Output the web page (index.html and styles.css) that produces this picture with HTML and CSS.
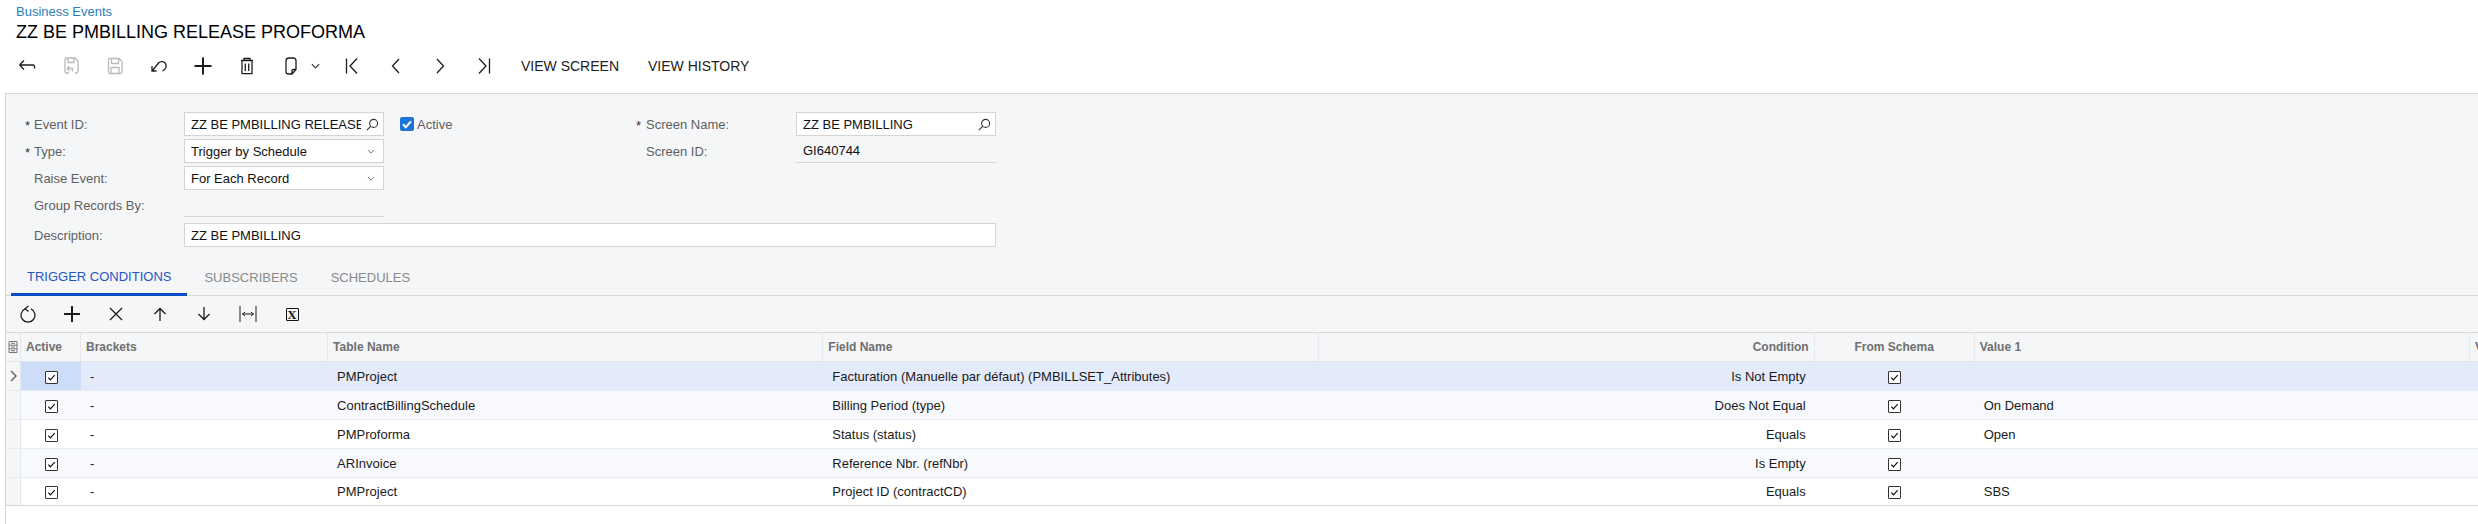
FILE: index.html
```html
<!DOCTYPE html>
<html>
<head>
    <meta charset="utf-8">
    <title>ZZ BE PMBILLING RELEASE PROFORMA</title>
    <link rel="stylesheet" href="styles.css">
</head>
<body>
<div class="page-head">
    <a class="crumb" href="#">Business Events</a>
    <div class="page-title">ZZ BE PMBILLING RELEASE PROFORMA</div>
    <div class="toolbar">
        <button class="tool"><svg class="ic" viewBox="0 0 18 18"><path d="M1.500 8l4.500-4.500M1.500 8l4.500 4.500M1.500 8h13.500a1.500 1.500 0 0 1 1.500 1.500v2"/></svg></button>
        <button class="tool off"><svg class="ic" viewBox="0 0 18 18"><path d="M7 16H4.500A1.500 1.500 0 0 1 3 14.500V2.500A1.500 1.500 0 0 1 4.500 1H13l3 3v10.500a1.500 1.500 0 0 1-1.500 1.500H13M6 1v4.500h6V1M5 11.500l2.500-2.500M5 11.500l2.500 2.500M5 11.500h5.500v3"/></svg></button>
        <button class="tool off"><svg class="ic" viewBox="0 0 18 18"><path d="M4 1.500h9l3 3v10.500a1.500 1.500 0 0 1-1.500 1.500h-10.500A1.500 1.500 0 0 1 2.500 15V3A1.500 1.500 0 0 1 4 1.500zM5.500 1.500v5h7v-5M5 16.500v-6h8v6"/></svg></button>
        <button class="tool"><svg class="ic" viewBox="0 0 18 18"><path d="M2 9v5h4.500M2.500 13.500L8.500 6C10.500 3.800 15 4 16 7.500 16.600 10 15 12.500 12.500 14"/></svg></button>
        <button class="tool"><svg class="ic heavy" viewBox="0 0 18 18"><path d="M9 .5v17M.5 9h17"/></svg></button>
        <button class="tool"><svg class="ic" viewBox="0 0 18 18"><path d="M3 3.500h12M6 3.500V1.500h6v2M4 3.500v13.200h10V3.500M7.300 6.500v7.500M10.700 6.500v7.500"/></svg></button>
        <button class="tool tool-menu"><svg class="ic" viewBox="0 0 18 18"><path d="M7 1h4.500A2.500 2.500 0 0 1 14 3.500v9L10 17H6.500A2.500 2.500 0 0 1 4 14.500V4A3 3 0 0 1 7 1zM14 12.500h-2.500A1.500 1.500 0 0 0 10 14v3"/></svg><svg class="ic-small" viewBox="0 0 10 6"><path d="M1 1l4 4 4-4"/></svg></button>
        <button class="tool"><svg class="ic" viewBox="0 0 18 18"><path d="M3.500 1.500v15M14 1.500L7 9l7 7.500"/></svg></button>
        <button class="tool"><svg class="ic" viewBox="0 0 18 18"><path d="M12 2L5.500 9l6.500 7"/></svg></button>
        <button class="tool"><svg class="ic" viewBox="0 0 18 18"><path d="M6 2l6.500 7L6 16"/></svg></button>
        <button class="tool"><svg class="ic" viewBox="0 0 18 18"><path d="M14.500 1.500v15M4 1.500L11 9l-7 7.500"/></svg></button>
        <button class="tool-text">VIEW SCREEN</button>
        <button class="tool-text">VIEW HISTORY</button>
    </div>
</div>

<div class="panel">
    <div class="form">
        <div class="form-top">
            <div class="form-col first">
                <div class="form-row">
                    <span class="star">*</span><label>Event ID:</label>
                    <div class="input lookup"><span class="input-text">ZZ BE PMBILLING RELEASE PROFORMA</span><svg class="search" viewBox="0 0 14 14"><circle cx="8.200" cy="5.800" r="4.300"/><path d="M5 9l-4 4"/></svg></div>
                    <span class="check-blue"><svg viewBox="0 0 14 14"><path d="M3 7.300l2.800 2.900L11 4.300"/></svg></span><span class="check-label">Active</span>
                </div>
                <div class="form-row">
                    <span class="star">*</span><label>Type:</label>
                    <div class="input"><span class="input-text">Trigger by Schedule</span><svg class="caret" viewBox="0 0 10 6"><path d="M1 1l4 4 4-4"/></svg></div>
                </div>
                <div class="form-row">
                    <span class="star"></span><label>Raise Event:</label>
                    <div class="input"><span class="input-text">For Each Record</span><svg class="caret" viewBox="0 0 10 6"><path d="M1 1l4 4 4-4"/></svg></div>
                </div>
                <div class="form-row">
                    <span class="star"></span><label>Group Records By:</label>
                    <div class="readonly"></div>
                </div>
            </div>
            <div class="form-col">
                <div class="form-row">
                    <span class="star wide">*</span><label>Screen Name:</label>
                    <div class="input lookup"><span class="input-text">ZZ BE PMBILLING</span><svg class="search" viewBox="0 0 14 14"><circle cx="8.200" cy="5.800" r="4.300"/><path d="M5 9l-4 4"/></svg></div>
                </div>
                <div class="form-row">
                    <span class="star wide"></span><label>Screen ID:</label>
                    <div class="readonly">GI640744</div>
                </div>
            </div>
        </div>
        <div class="form-row desc-row">
            <span class="star"></span><label>Description:</label>
            <div class="input desc"><span class="input-text">ZZ BE PMBILLING</span></div>
        </div>
    </div>

    <div class="tabs">
        <div class="tab active">TRIGGER CONDITIONS</div>
        <div class="tab">SUBSCRIBERS</div>
        <div class="tab">SCHEDULES</div>
    </div>

    <div class="grid-toolbar">
        <button class="tool"><svg class="ic" viewBox="0 0 18 18"><path d="M6 3.800a7 7 0 1 0 6 0M9.500 1L6 3.800l3.500 2.700"/></svg></button>
        <button class="tool"><svg class="ic heavy" viewBox="0 0 18 18"><path d="M9 1v16M1 9h16"/></svg></button>
        <button class="tool"><svg class="ic" viewBox="0 0 18 18"><path d="M3 3l12 12M15 3L3 15"/></svg></button>
        <button class="tool"><svg class="ic" viewBox="0 0 18 18"><path d="M9 3.500V16M3.500 9L9 3.500 14.500 9"/></svg></button>
        <button class="tool"><svg class="ic" viewBox="0 0 18 18"><path d="M9 2v12.500M3.500 9L9 14.500 14.500 9"/></svg></button>
        <button class="tool"><svg class="ic thin" viewBox="0 0 18 18"><path d="M1 1v16M17 1v16M3.500 9h11M3.500 9l2.500-2M3.500 9l2.500 2M14.500 9l-2.500-2M14.500 9l-2.500 2"/></svg></button>
        <button class="tool"><span class="excel">X</span></button>
    </div>

    <table class="grid">
        <colgroup>
            <col class="c-sel"><col class="c-active"><col class="c-brackets"><col class="c-table"><col class="c-field"><col class="c-cond"><col class="c-schema"><col class="c-value"><col class="c-rest">
        </colgroup>
        <thead>
            <tr>
                <th class="sel"><svg class="doc" viewBox="0 0 10 12"><path d="M1 .5h8v11H1zM1 4.200h8M1 7.800h8M3 2.300h4M3 6h4M3 9.700h4"/></svg></th>
                <th>Active</th>
                <th>Brackets</th>
                <th>Table Name</th>
                <th>Field Name</th>
                <th class="right">Condition</th>
                <th class="center">From Schema</th>
                <th>Value 1</th>
                <th>Value 2</th>
            </tr>
        </thead>
        <tbody>
            <tr class="current">
                <td class="sel"><svg class="arrow" viewBox="0 0 7 12"><path d="M1 1l5 5-5 5"/></svg></td>
                <td class="center active-cell"><span class="box"><svg viewBox="0 0 12 12"><path d="M2.500 6.200l2.300 2.300 4.700-5"/></svg></span></td>
                <td>-</td>
                <td>PMProject</td>
                <td>Facturation (Manuelle par défaut) (PMBILLSET_Attributes)</td>
                <td class="right">Is Not Empty</td>
                <td class="center"><span class="box"><svg viewBox="0 0 12 12"><path d="M2.500 6.200l2.300 2.300 4.700-5"/></svg></span></td>
                <td></td><td></td>
            </tr>
            <tr class="alt">
                <td class="sel"></td>
                <td class="center"><span class="box"><svg viewBox="0 0 12 12"><path d="M2.500 6.200l2.300 2.300 4.700-5"/></svg></span></td>
                <td>-</td>
                <td>ContractBillingSchedule</td>
                <td>Billing Period (type)</td>
                <td class="right">Does Not Equal</td>
                <td class="center"><span class="box"><svg viewBox="0 0 12 12"><path d="M2.500 6.200l2.300 2.300 4.700-5"/></svg></span></td>
                <td>On Demand</td><td></td>
            </tr>
            <tr>
                <td class="sel"></td>
                <td class="center"><span class="box"><svg viewBox="0 0 12 12"><path d="M2.500 6.200l2.300 2.300 4.700-5"/></svg></span></td>
                <td>-</td>
                <td>PMProforma</td>
                <td>Status (status)</td>
                <td class="right">Equals</td>
                <td class="center"><span class="box"><svg viewBox="0 0 12 12"><path d="M2.500 6.200l2.300 2.300 4.700-5"/></svg></span></td>
                <td>Open</td><td></td>
            </tr>
            <tr class="alt">
                <td class="sel"></td>
                <td class="center"><span class="box"><svg viewBox="0 0 12 12"><path d="M2.500 6.200l2.300 2.300 4.700-5"/></svg></span></td>
                <td>-</td>
                <td>ARInvoice</td>
                <td>Reference Nbr. (refNbr)</td>
                <td class="right">Is Empty</td>
                <td class="center"><span class="box"><svg viewBox="0 0 12 12"><path d="M2.500 6.200l2.300 2.300 4.700-5"/></svg></span></td>
                <td></td><td></td>
            </tr>
            <tr class="last">
                <td class="sel"></td>
                <td class="center"><span class="box"><svg viewBox="0 0 12 12"><path d="M2.500 6.200l2.300 2.300 4.700-5"/></svg></span></td>
                <td>-</td>
                <td>PMProject</td>
                <td>Project ID (contractCD)</td>
                <td class="right">Equals</td>
                <td class="center"><span class="box"><svg viewBox="0 0 12 12"><path d="M2.500 6.200l2.300 2.300 4.700-5"/></svg></span></td>
                <td>SBS</td><td></td>
            </tr>
        </tbody>
    </table>
</div>
</body>
</html>
```

FILE: styles.css
```css
html, body {
    margin: 0;
    height: 524px;
    overflow: hidden;
    background: #fff;
}
body {
    font-family: "Liberation Sans", Arial, sans-serif;
    font-size: 13px;
    color: #111;
}
button {
    font: inherit;
    color: inherit;
    background: none;
    border: 0;
    padding: 0;
}

/* page header */
.page-head {
    height: 93px;
    box-sizing: border-box;
    padding-top: 4px;
}
.crumb {
    display: block;
    margin-left: 16px;
    line-height: 16px;
    color: #2a7fb8;
    text-decoration: none;
}
.page-title {
    margin-left: 16px;
    font-size: 18px;
    line-height: 24px;
    color: #000;
}
.toolbar {
    display: flex;
    padding-left: 5px;
    height: 44px;
}
.tool {
    width: 44px;
    height: 36px;
    flex: none;
    display: flex;
    align-items: center;
    justify-content: center;
    color: #1c1c1c;
}
.toolbar .tool {
    height: 44px;
}
.tool.off {
    color: #b9b9b9;
}
.tool-menu {
    width: 61px;
    justify-content: flex-start;
    padding-left: 13px;
    box-sizing: border-box;
}
.tool-text {
    padding: 0 15px;
    margin-right: -1px;
    font-size: 14px;
    color: #222;
}
.ic {
    width: 18px;
    height: 18px;
    fill: none;
    stroke: currentColor;
    stroke-width: 1.3;
}
.ic.heavy {
    stroke-width: 2;
}
.ic.thin {
    stroke-width: 1;
}
.ic-small {
    width: 9px;
    height: 6px;
    margin-left: 11px;
    fill: none;
    stroke: #333;
    stroke-width: 1.3;
}

/* form panel */
.panel {
    margin-left: 5px;
    height: 431px;
    border-left: 1px solid #d6d6d6;
    border-top: 1px solid #d6d6d6;
    background: #fff;
}
.form {
    background: #f4f6f8;
    padding: 18px 0 8px 19px;
}
.form-top {
    display: flex;
}
.form-col {
    display: flex;
    flex-direction: column;
    gap: 3px;
}
.form-col.first {
    width: 611px;
}
.form-row {
    display: flex;
    align-items: center;
    height: 24px;
}
.desc-row {
    margin-top: 6px;
}
.star {
    width: 9px;
    height: 20px;
    padding-top: 4px;
    flex: none;
    color: #333;
    line-height: 20px;
}
.star.wide {
    width: 10px;
}
.form-row label {
    width: 150px;
    flex: none;
    color: #5f5f5f;
}
.input {
    width: 200px;
    height: 24px;
    flex: none;
    box-sizing: border-box;
    display: flex;
    align-items: center;
    padding: 0 6px;
    background: #fff;
    border: 1px solid #d4d4d4;
}
.input.lookup {
    padding-right: 4px;
}
.input.desc {
    width: 812px;
}
.input-text {
    flex: 1;
    white-space: nowrap;
    overflow: hidden;
    color: #111;
}
.search {
    width: 13px;
    height: 13px;
    flex: none;
    margin-left: 5px;
    fill: none;
    stroke: #333;
    stroke-width: 1.2;
}
.caret {
    width: 8px;
    height: 5px;
    flex: none;
    margin-right: 2px;
    fill: none;
    stroke: #777;
    stroke-width: 1.2;
}
.readonly {
    width: 200px;
    height: 24px;
    flex: none;
    box-sizing: border-box;
    padding-left: 7px;
    line-height: 24px;
    border-bottom: 1px solid #d4d4d4;
}
.check-blue {
    width: 14px;
    height: 14px;
    margin-left: 16px;
    flex: none;
    border-radius: 2px;
    background: #1a73d9;
}
.check-blue svg {
    display: block;
    fill: none;
    stroke: #fff;
    stroke-width: 2;
}
.check-label {
    margin-left: 3px;
    color: #5f5f5f;
}

/* tabs */
.tabs {
    display: flex;
    height: 41px;
    box-sizing: border-box;
    padding-left: 5px;
    gap: 1px;
    background: #f4f6f8;
    border-bottom: 1px solid #d9d9d9;
}
.tab {
    height: 41px;
    box-sizing: border-box;
    padding: 15px 16px 0;
    color: #8a8a8a;
}
.tab.active {
    padding-top: 14px;
    color: #1f57c3;
    border-bottom: 3px solid #0c4fc4;
}
.grid-toolbar {
    display: flex;
    height: 36px;
    background: #f4f6f8;
}
.excel {
    width: 11px;
    height: 11px;
    display: block;
    border: 1px solid #111;
    border-radius: 1px;
    font-family: "Liberation Serif", serif;
    font-weight: bold;
    font-size: 13px;
    line-height: 11px;
    text-align: center;
}

/* grid */
.grid {
    width: 2473px;
    table-layout: fixed;
    border-collapse: separate;
    border-spacing: 0;
}
.c-sel { width: 15px; }
.c-active { width: 60px; }
.c-brackets { width: 247px; }
.c-table { width: 495px; }
.c-field { width: 496px; }
.c-cond { width: 495px; }
.c-schema { width: 160px; }
.c-value { width: 495px; }
.c-rest { width: 9px; }
.grid th {
    box-sizing: border-box;
    height: 30px;
    padding: 0 5px;
    text-align: left;
    font-size: 12px;
    font-weight: bold;
    color: #6f6f6f;
    white-space: nowrap;
    overflow: hidden;
    background: #f4f6f8;
    border-top: 1px solid #d9d9d9;
    border-bottom: 1px solid #e3e6ea;
    border-right: 1px solid #e6e8ec;
}
.grid td {
    box-sizing: border-box;
    height: 29px;
    padding: 0 9px;
    white-space: nowrap;
    overflow: hidden;
    color: #1a1a1a;
    border-bottom: 1px solid #e8edf4;
}
.grid tr.alt td {
    background: #f8f9fd;
}
.grid tr.current td {
    background: #e3ebfb;
}
.grid tr.current td.active-cell {
    background: #cddcf7;
}
.grid tr.last td {
    height: 28px;
    border-bottom-color: #d4d4d4;
}
.grid .right {
    text-align: right;
}
.grid .center {
    text-align: center;
}
.grid th.sel, .grid td.sel, .grid tr.alt td.sel, .grid tr.current td.sel {
    padding: 0;
    text-align: center;
    background: #f4f6f8;
    border-right: 1px solid #e3e6ea;
}
.doc {
    display: block;
    width: 10px;
    height: 12px;
    margin: auto;
    fill: none;
    stroke: #777;
}
.arrow {
    display: block;
    width: 7px;
    height: 12px;
    margin: auto;
    fill: none;
    stroke: #666;
    stroke-width: 1.5;
}
.box {
    display: inline-block;
    width: 11px;
    height: 11px;
    vertical-align: middle;
    background: #fff;
    border: 1px solid #333;
    border-radius: 1px;
}
.box svg {
    display: block;
    fill: none;
    stroke: #111;
    stroke-width: 1.3;
}
```
